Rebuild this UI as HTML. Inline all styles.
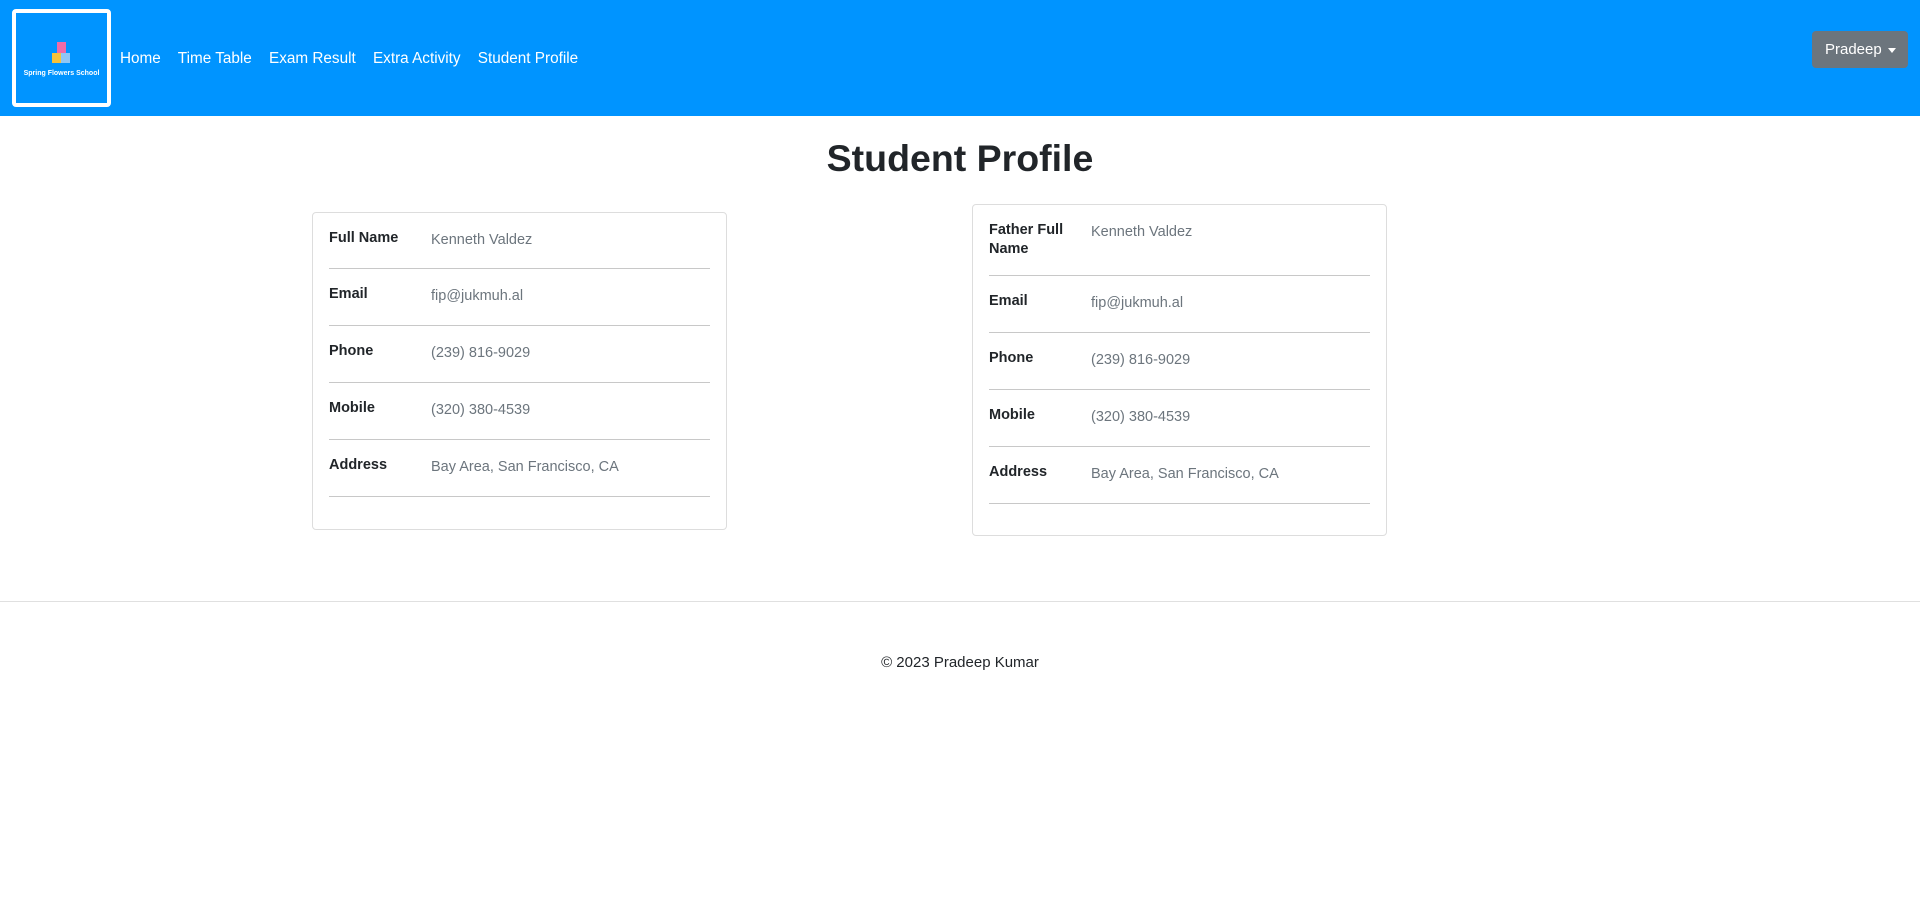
<!DOCTYPE html>
<html><head><style>
*{box-sizing:border-box;margin:0;padding:0}
body{width:1920px;height:904px;background:#fff;font-family:"Segoe UI","Liberation Sans",sans-serif;color:#212529;position:relative;overflow:hidden}
nav{position:absolute;left:0;top:0;width:1920px;height:116px;background:#0094ff}
.logo{position:absolute;left:12px;top:9px;width:99px;height:98px;border:4px solid #fff;border-radius:4px;background:#0094ff}
.logo .t{position:absolute;left:0;right:0;top:57px;text-align:center;color:#fff;font-size:7px;font-weight:bold;white-space:nowrap}
.links{position:absolute;left:120px;top:50px;color:#fff;font-size:15.3px}
.links span{margin-right:13px}
.btn{position:absolute;left:1812px;top:31px;width:96px;height:37px;background:#6c757d;border-radius:4px;color:#fff;font-size:15px;line-height:37px;padding-left:13px}
.btn:after{content:"";position:absolute;right:12px;top:17px;border-left:4px solid transparent;border-right:4px solid transparent;border-top:5px solid #fff}
h1{position:absolute;left:0;width:1920px;top:137px;text-align:center;font-size:37.5px;font-weight:bold}
.card{position:absolute;width:415px;border:1px solid #ddd;border-radius:4px;padding:0 16px}
.row{position:relative;border-bottom:1px solid #c8c8c8;font-size:14.5px}
.row b{position:absolute;left:0;top:16px;font-weight:600;width:90px;line-height:19px}
.row i{position:absolute;left:102px;top:19px;font-style:normal;color:#6c757d}
hr{position:absolute;left:0;top:601px;width:1920px;border:0;border-top:1px solid #e0e0e0}
.foot{position:absolute;left:0;width:1920px;top:654px;text-align:center;font-size:15px}
</style></head><body>
<nav>
<div class="logo">
<div style="position:absolute;left:41px;top:29px;width:9px;height:11px;background:#f06ba8"></div>
<div style="position:absolute;left:36px;top:40px;width:9px;height:10px;background:#f7c23a"></div>
<div style="position:absolute;left:45px;top:40px;width:9px;height:10px;background:#8fc6f5"></div>
<div class="t">Spring Flowers School</div>
</div>
<div class="links"><span>Home</span> <span>Time Table</span> <span>Exam Result</span> <span>Extra Activity</span> <span>Student Profile</span></div>
<div class="btn">Pradeep</div>
</nav>
<h1>Student Profile</h1>
<div class="card" style="left:312px;top:212px;height:318px">
<div class="row" style="height:56px"><b>Full Name</b><i>Kenneth Valdez</i></div>
<div class="row" style="height:57px"><b>Email</b><i>fip@jukmuh.al</i></div>
<div class="row" style="height:57px"><b>Phone</b><i>(239) 816-9029</i></div>
<div class="row" style="height:57px"><b>Mobile</b><i>(320) 380-4539</i></div>
<div class="row" style="height:57px"><b>Address</b><i>Bay Area, San Francisco, CA</i></div>
</div>
<div class="card" style="left:972px;top:204px;height:332px">
<div class="row" style="height:71px"><b>Father Full Name</b><i>Kenneth Valdez</i></div>
<div class="row" style="height:57px"><b>Email</b><i>fip@jukmuh.al</i></div>
<div class="row" style="height:57px"><b>Phone</b><i>(239) 816-9029</i></div>
<div class="row" style="height:57px"><b>Mobile</b><i>(320) 380-4539</i></div>
<div class="row" style="height:57px"><b>Address</b><i>Bay Area, San Francisco, CA</i></div>
</div>
<hr>
<div class="foot">© 2023 Pradeep Kumar</div>
</body></html>
